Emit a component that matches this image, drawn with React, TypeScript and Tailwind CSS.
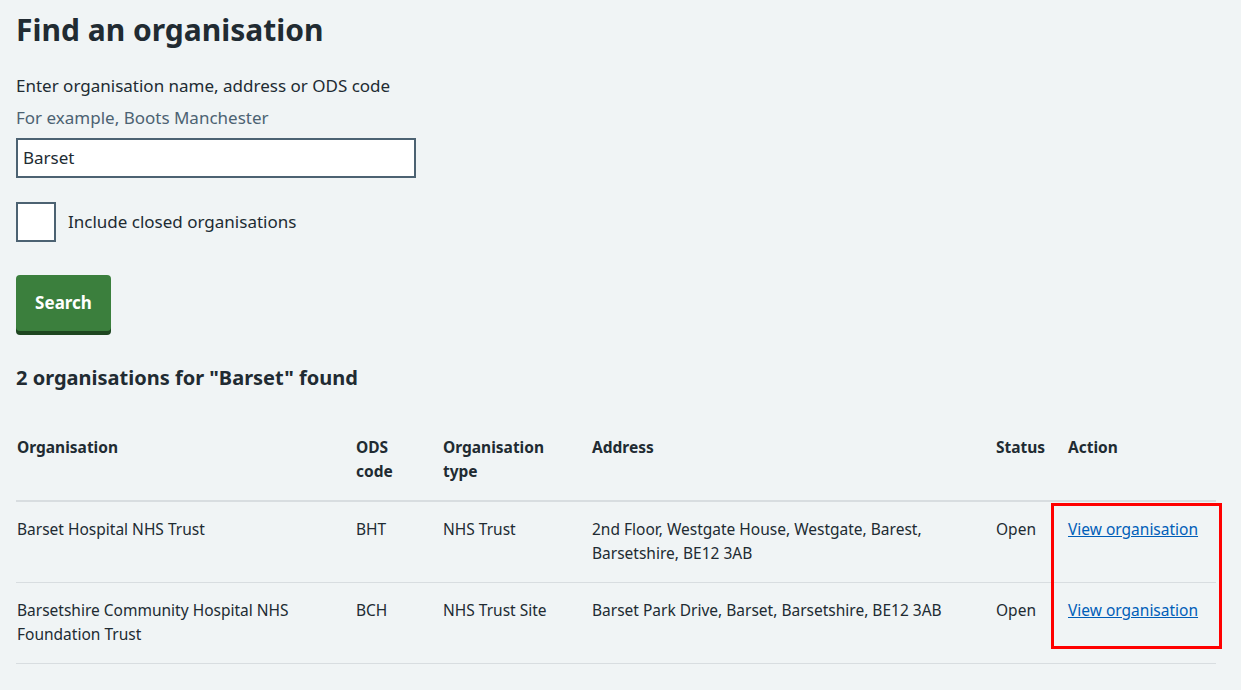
export default function App() {
  const rows = [
    ["Barset Hospital NHS Trust", "BHT", "NHS Trust", "2nd Floor, Westgate House, Westgate, Barest, Barsetshire, BE12 3AB", "Open"],
    ["Barsetshire Community Hospital NHS Foundation Trust", "BCH", "NHS Trust Site", "Barset Park Drive, Barset, Barsetshire, BE12 3AB", "Open"],
  ];
  return (
    <div className="relative min-h-[690px] bg-[#f0f4f5] text-[#212b32] px-4 pt-[8px]" style={{ fontFamily: '"Noto Sans", "Open Sans", sans-serif' }}>
      <h1 className="text-[30px] font-bold leading-[44px]">Find an organisation</h1>
      <div className="mt-[22px] text-[17px] leading-[24px]">Enter organisation name, address or ODS code</div>
      <div className="mt-[8px] text-[17px] leading-[24px] text-[#4c6272]">For example, Boots Manchester</div>
      <div className="mt-[8px] w-[400px] h-[40px] border-2 border-[#4c6272] bg-white px-[5px] flex items-center text-[17px]">Barset</div>
      <div className="mt-[24px] flex items-center gap-[12px]">
        <div className="w-[40px] h-[40px] border-2 border-[#4c6272] bg-white" />
        <span className="text-[17px]">Include closed organisations</span>
      </div>
      <button className="mt-[33px] w-[95px] h-[56px] bg-[#3b7f3d] text-white font-bold text-[17px] rounded-[4px] shadow-[0_4px_0_#1e4620]">Search</button>
      <h2 className="mt-[32px] text-[20px] font-bold leading-[30px]">2 organisations for "Barset" found</h2>
      <table className="mt-[42px] w-[1200px] text-[15.5px] leading-[24px] border-collapse table-fixed">
        <colgroup>
          <col className="w-[339px]" /><col className="w-[87px]" /><col className="w-[149px]" /><col className="w-[404px]" /><col className="w-[72px]" /><col />
        </colgroup>
        <thead>
          <tr className="border-b-2 border-[#d8dde0] align-top text-left">
            {["Organisation", "ODS code", "Organisation type", "Address", "Status", "Action"].map((h, i) => (
              <th key={i} className={`font-bold pl-px pr-4 pb-[17px] ${i === 1 ? "pr-[40px]" : ""}`}>{h}</th>
            ))}
          </tr>
        </thead>
        <tbody>
          {rows.map((r, i) => (
            <tr key={i} className="border-b border-[#d8dde0] align-top">
              {r.map((c, j) => (
                <td key={j} className="pl-px pr-4 pt-[15px] pb-[17px]">{c}</td>
              ))}
              <td className="pl-px pt-[15px] pb-[17px]"><a href="#" className="text-[#005eb8] underline">View organisation</a></td>
            </tr>
          ))}
        </tbody>
      </table>
      <div className="absolute left-[1051px] top-[503px] w-[171px] h-[146px] border-[3px] border-[#ff0000]" />
    </div>
  );
}
